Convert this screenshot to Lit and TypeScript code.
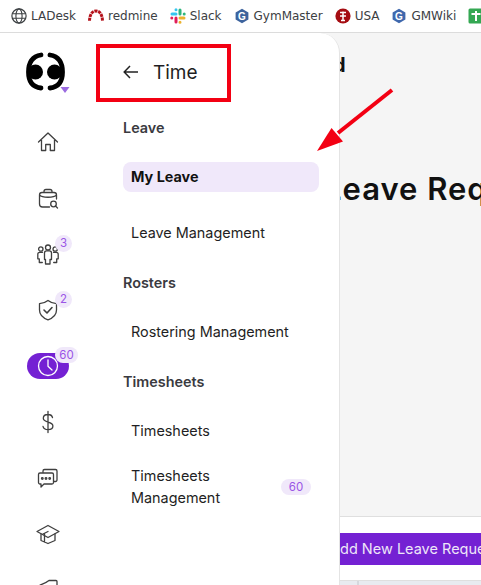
import { LitElement, html, css, svg } from "lit";
import { customElement } from "lit/decorators.js";

const bookmarks = [
  { label: "LADesk", icon: svg`<circle cx="8" cy="8" r="7.100" fill="none" stroke="#3c4043" stroke-width="1.200"/><ellipse cx="8" cy="8" rx="3.100" ry="7.100" fill="none" stroke="#3c4043" stroke-width="1.100"/><path d="M1.500 5.700h13M1.500 10.300h13" stroke="#3c4043" stroke-width="1.100"/>` },
  { label: "redmine", icon: svg`<path d="M1.500 12.800C1.800 6.500 4.200 3 8 3c3.800 0 6.200 3.500 6.500 9.800" fill="none" stroke="#b5121b" stroke-width="3" stroke-dasharray="3 .8"/>` },
  { label: "Slack", icon: svg`<g stroke-width="3" stroke-linecap="round" fill="none"><path d="M6 1.800v0M6 6H2" stroke="#36c5f0"/><path d="M10 2v4M14.200 6h0" stroke="#2eb67d"/><path d="M14 10h-4M10 14.200v0" stroke="#ecb22e"/><path d="M6 14v-4M1.800 10h0" stroke="#e01e5a"/></g>` },
  { label: "GymMaster", icon: svg`<path d="M8 .8 14.400 4.400v7.200L8 15.200 1.600 11.600V4.400Z" fill="#3d639d"/><text x="8" y="11.500" font-size="10" font-weight="700" font-family="Liberation Sans" text-anchor="middle" fill="#fff">G</text>` },
  { label: "USA", icon: svg`<circle cx="8" cy="8" r="7.600" fill="#a50d12"/><path d="M5 4.500h6M8 3.500v9M5 8h6M6 12.500h4" stroke="#fff" stroke-width="1.500"/>` },
  { label: "GMWiki", icon: svg`<path d="M8 .8 14.400 4.400v7.200L8 15.200 1.600 11.600V4.400Z" fill="#3f68ad"/><text x="8" y="11.500" font-size="10" font-weight="700" font-family="Liberation Sans" text-anchor="middle" fill="#fff">G</text>` },
  { label: "", icon: svg`<rect x=".5" y=".5" width="15" height="15" rx="1.500" fill="#34a853"/><path d="M8 3v10M3.500 6h9" stroke="#fff" stroke-width="2"/>` },
];

const railIcons = [
  { icon: svg`<path d="M2.500 12 12 3l9.500 9M5.500 10v10.500h4.200v-6h4.600v6h4.200V10"/>` },
  { icon: svg`<path d="M8 6.500V5.500a2 2 0 0 1 2-2h4a2 2 0 0 1 2 2v1M3.500 9c0-1.500 1-2.500 2.500-2.500h12c1.500 0 2.500 1 2.500 2.500v4M3.500 9v9a3 3 0 0 0 3 3h7M3.500 9c2.500 3 14.500 3 17 0"/><circle cx="17.500" cy="18" r="2.800"/><path d="m19.500 20 2 2"/>` },
  { badge: "3", icon: svg`<circle cx="12" cy="5.500" r="2.500"/><circle cx="4.800" cy="7" r="2.200"/><circle cx="19.200" cy="7" r="2.200"/><path d="M8.500 11c0-1.500 1-2.200 2-2.200h3c1 0 2 .7 2 2.200v6.500h-1.500V22h-4.500v-4.500H8.500Z"/><path d="M6.500 10.300H3.800c-1 0-2 .7-2 2v4.500h1.500v3.700h3M17.500 10.300h2.700c1 0 2 .7 2 2v4.500h-1.500v3.700h-3"/>` },
  { badge: "2", icon: svg`<path d="M12 2.500c2.500 2 5.500 3 8.500 3.200v6.300c0 4.800-3.500 8-8.500 9.800-5-1.800-8.500-5-8.500-9.800V5.700c3-.2 6-1.200 8.500-3.200Z"/><path d="m8 12 3 3 5-5.500" stroke-width="1.600"/>` },
  { active: true, badge: "60", icon: svg`<circle cx="12" cy="12" r="9.500"/><path d="M12 6v6.300l4 3.700"/>` },
  { icon: svg`<path d="M16.500 7.500C16 5.500 14.300 4.500 12 4.500c-2.700 0-4.700 1.400-4.700 3.700 0 5 9.600 2.600 9.600 7.700 0 2.300-2 3.700-4.900 3.700-2.600 0-4.500-1.200-5-3.300M12 1.500v21"/>` },
  { icon: svg`<path d="M7 6.500V5a1.500 1.500 0 0 1 1.500-1.500h11A1.500 1.500 0 0 1 21 5v9a1.500 1.500 0 0 1-1.500 1.500H18"/><path d="M4 7h12a1.500 1.500 0 0 1 1.500 1.500v8A1.500 1.500 0 0 1 16 18H8l-3 3v-3H4a1.500 1.500 0 0 1-1.500-1.500v-8A1.500 1.500 0 0 1 4 7Z"/><circle cx="6.300" cy="12.500" r=".8"/><circle cx="10" cy="12.500" r=".8"/><circle cx="13.700" cy="12.500" r=".8"/>` },
  { icon: svg`<path d="M12 3.500 23 9.500l-11 6-11-6Z"/><path d="M5 12v6.500l7 3 7-3V12M8.500 11.500V20M12 9.500l-5 2.500"/>` },
  { icon: svg`<path d="M4 7c3-1 6-2 9-4.500h7a1 1 0 0 1 1 1V8"/>` },
];

@customElement("app-root")
export class AppRoot extends LitElement {
  static styles = css`
    :host { display: flex; flex-direction: column; height: 585px; overflow: hidden; background: #fff; font-family: Inter, "Noto Sans", sans-serif; color: #1f1f24; }
    .bookmarks { flex: 0 0 32px; display: flex; align-items: center; gap: 12px; padding-left: 11px; background: #fff; border-bottom: 1px solid #dcdcdc; overflow: hidden; white-space: nowrap; font-family: "DejaVu Sans", sans-serif; font-size: 12px; color: #3c4043; box-sizing: content-box; }
    .bm { display: flex; align-items: center; gap: 4px; flex: none; }
    .bm svg { display: block; flex: none; }
    .body { flex: 1; position: relative; min-height: 0; }
    .main { height: 100%; display: flex; flex-direction: column; background: #f5f5f5; overflow: hidden; }
    .top { flex: 1; min-height: 0; border-bottom: 1px solid #dfdfdf; }
    .title { margin: 20px 0 0 239px; font-size: 20px; line-height: 24px; font-weight: 700; color: #111; white-space: nowrap; }
    .heading { margin: 94px 0 0 324px; font-size: 31px; line-height: 36px; font-weight: 600; letter-spacing: 1px; color: #111; white-space: nowrap; }
    .bar { flex: 0 0 64px; background: #fff; border-bottom: 1px solid #dfdfdf; padding: 16px 0 0 300px; box-sizing: border-box; }
    .add { display: block; height: 32px; padding-left: 30px; background: #7421d3; color: #eee6f8; font-size: 14.5px; line-height: 32px; white-space: nowrap; overflow: hidden; }
    .table-head { flex: 0 0 4px; background: #e8ebf0; padding-left: 357px; }
    .table-head i { display: block; width: 2px; height: 100%; background: #d5d8dd; }
    .sidebar { position: absolute; inset: 0 auto 0 0; width: 340px; display: flex; background: #fff; border-top-right-radius: 20px; border-right: 1px solid #e4e4e4; box-sizing: border-box; overflow: hidden; }
    .rail { flex: 0 0 96px; display: flex; flex-direction: column; align-items: center; }
    .logo { flex: 0 0 81px; width: 96px; }
    .logo svg { display: block; }
    .ri { flex: 0 0 56px; width: 96px; display: flex; align-items: center; justify-content: center; position: relative; }
    .ri svg { fill: none; stroke: #3f3f3f; stroke-width: 1.300; stroke-linecap: round; stroke-linejoin: round; display: block; }
    .ri .wrap { width: 42px; height: 26px; display: flex; align-items: center; justify-content: center; border-radius: 13px; }
    .ri.active .wrap { background: #7421d3; }
    .ri.active svg { stroke: #fff; }
    .badge { position: absolute; top: 9px; left: 55px; min-width: 17px; height: 17px; padding: 0 3px; box-sizing: border-box; border-radius: 9px; background: #f0e8fa; color: #9a55e6; font-size: 11.5px; line-height: 17px; text-align: center; }
    .ri.active .badge { width: 23px; height: 16px; line-height: 16px; }
    .panel { flex: 1; min-width: 0; padding: 0 20px 0 27px; }
    .head { height: 78px; display: flex; align-items: center; gap: 14px; font-size: 19px; color: #1f1f24; }
    .head svg { display: block; fill: none; stroke: #222; stroke-width: 1.500; }
    .section { height: 20px; line-height: 20px; margin-top: 7px; font-size: 14.400px; font-weight: 600; color: #3a3a40; }
    .item { display: flex; align-items: center; justify-content: space-between; min-height: 30px; margin-top: 26px; padding: 0 8px; border-radius: 8px; font-size: 14.400px; line-height: 22px; color: #1f1f24; }
    .section + .item { margin-top: 24px; }
    .item + .section { margin-top: 25px; }
    .item.on { background: #f0e8fa; font-weight: 700; color: #111; }
    .count { flex: none; width: 30px; height: 16px; border-radius: 8px; background: #f0e8fa; color: #9a55e6; font-size: 11.5px; line-height: 16px; text-align: center; }
    .item.two { min-height: 44px; margin-top: 19px; }
    .item.two span:first-child { width: 110px; }
    .mark { position: absolute; left: 96px; top: 11px; width: 135px; height: 58px; border: 4px solid #f30013; box-sizing: border-box; pointer-events: none; }
    .arrow { position: absolute; left: 310px; top: 50px; pointer-events: none; display: block; }
  `;

  render() {
    return html`
      <div class="bookmarks">
        ${bookmarks.map((b) => html`<div class="bm"><svg width="16" height="16" viewBox="0 0 16 16">${b.icon}</svg>${b.label ? html`<span>${b.label}</span>` : ""}</div>`)}
      </div>
      <div class="body">
        <div class="main">
          <div class="top">
            <div class="title">Dashboard</div>
            <div class="heading">Leave Requests</div>
          </div>
          <div class="bar"><span class="add">Add New Leave Request</span></div>
          <div class="table-head"><i></i></div>
        </div>
        <div class="sidebar">
          <div class="rail">
            <div class="logo">
              <svg width="96" height="81" viewBox="0 0 96 81">
                <g fill="none" stroke="#000" stroke-width="4.800" stroke-linecap="round">
                  <path d="M41 22C32 23.500 28.500 30 28.500 39c0 9 3.500 15 12.500 16"/>
                  <path d="M50 22C59 23.500 62.500 30 62.500 39c0 9-3.500 15-12.500 16"/>
                </g>
                <circle cx="35.500" cy="39" r="7.500" fill="#000"/>
                <circle cx="54.500" cy="39" r="7.500" fill="#000"/>
                <path d="M60.500 54h9l-4.500 6Z" fill="#9b6be0"/>
              </svg>
            </div>
            ${railIcons.map((r) => html`
              <div class="ri ${r.active ? "active" : ""}">
                <div class="wrap"><svg width="24" height="24" viewBox="0 0 24 24">${r.icon}</svg></div>
                ${r.badge ? html`<span class="badge">${r.badge}</span>` : ""}
              </div>`)}
          </div>
          <div class="panel">
            <div class="head">
              <svg width="16" height="14" viewBox="0 0 16 14"><path d="M15 7H1.500M7 1 1.200 7 7 13"/></svg>
              <span>Time</span>
            </div>
            <div class="section">Leave</div>
            <div class="item on"><span>My Leave</span></div>
            <div class="item"><span>Leave Management</span></div>
            <div class="section">Rosters</div>
            <div class="item"><span>Rostering Management</span></div>
            <div class="section">Timesheets</div>
            <div class="item"><span>Timesheets</span></div>
            <div class="item two"><span>Timesheets Management</span><span class="count">60</span></div>
          </div>
        </div>
        <div class="mark"></div>
        <svg class="arrow" width="90" height="75" viewBox="0 0 90 75">
          <path d="M82 7 28 50" stroke="#f30013" stroke-width="4" fill="none"/>
          <path d="M7 68 21.500 45 33 58.500Z" fill="#f30013"/>
        </svg>
      </div>
    `;
  }
}
